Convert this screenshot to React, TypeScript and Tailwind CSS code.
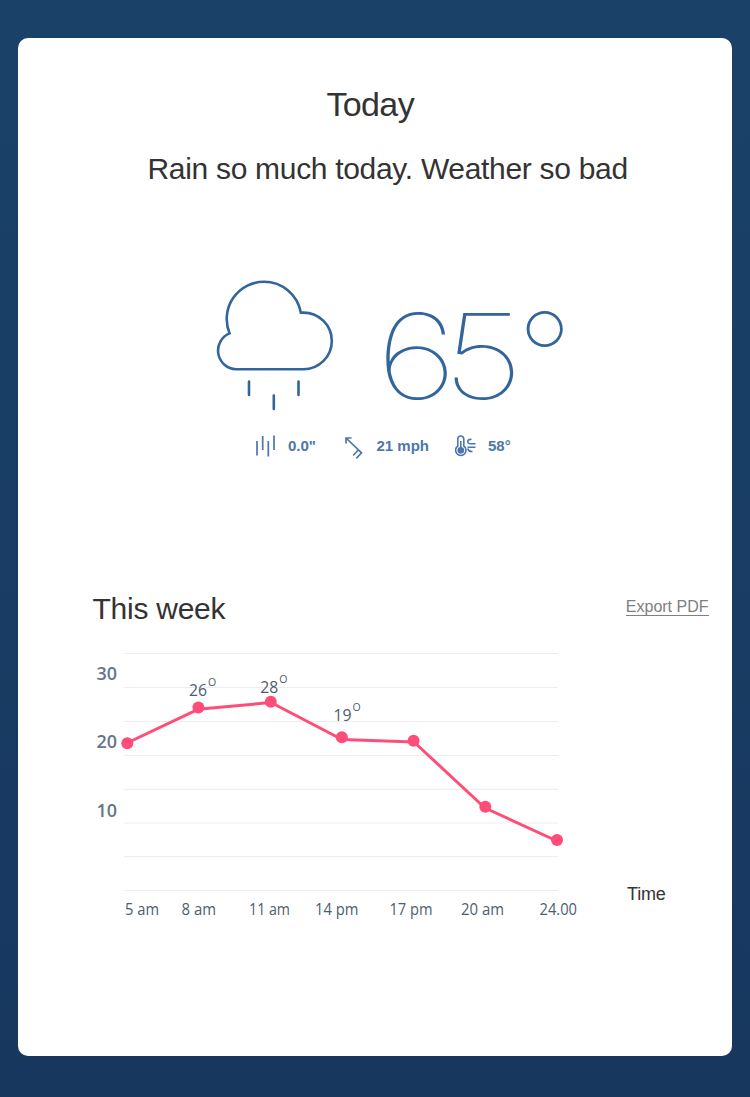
import React from "react";

const gridLines = [653.5, 687.5, 721.5, 755.5, 789.3, 823, 856.7, 890.5];

const segments = "127,743 198,709.3 271,702.5 342,739.5 414,742 485,808 557,841";

const points = [
  [127.3, 743.3],
  [198.4, 707.6],
  [270.8, 701.7],
  [341.8, 737.3],
  [413.6, 740.7],
  [485.3, 806.7],
  [557, 840],
];

const yLabels = [
  { text: "30", y: 680 },
  { text: "20", y: 748 },
  { text: "10", y: 817 },
];

const xLabels = [
  { text: "5 am", x: 125, w: 34 },
  { text: "8 am", x: 181.5, w: 34.5 },
  { text: "11 am", x: 249, w: 41 },
  { text: "14 pm", x: 315, w: 43.5 },
  { text: "17 pm", x: 389.5, w: 43 },
  { text: "20 am", x: 461, w: 43 },
  { text: "24.00", x: 539.5, w: 37.5 },
];

const values = [
  { text: "26", x: 189, y: 696 },
  { text: "28", x: 260.3, y: 693 },
  { text: "19", x: 333.5, y: 721 },
];

function RainCloud() {
  return (
    <svg className="h-[134px] w-[122px] shrink-0" viewBox="215 278 122 134" fill="none" stroke="#32659c" strokeWidth="2.6">
      <path d="M236 369.2H303.5A28.3 28.3 0 0 0 303.5 312.6H300.8A37.3 37.3 0 0 0 264 281.7A37.3 37.3 0 0 0 229.6 333.4A18.6 18.6 0 0 0 236 369.2Z" />
      <path strokeLinecap="round" d="M249 381.5V395M273.8 395.5V409M298.5 381.5V395" />
    </svg>
  );
}

function TemperatureChart() {
  return (
    <svg className="h-[285px] w-[510px] shrink-0" viewBox="85 640 510 285">
      {gridLines.map((y) => (
        <line key={y} x1="124" x2="558" y1={y} y2={y} stroke="#eeeef1" strokeWidth="1.2" />
      ))}
      <g className="font-['Open_Sans',sans-serif] text-[17.5px] font-semibold" fill="#64758a">
        {yLabels.map((l) => (
          <text key={l.text} x="96.5" y={l.y} textLength="20.5" lengthAdjust="spacingAndGlyphs">{l.text}</text>
        ))}
      </g>
      <polyline points={segments} fill="none" stroke="#ff4d79" strokeWidth="3" strokeLinejoin="round" />
      {points.map(([x, y]) => (
        <circle key={x} cx={x} cy={y} r="6" fill="#ff4d79" />
      ))}
      <g className="font-['Open_Sans',sans-serif] text-[16.5px]" fill="#4c5d70">
        {values.map((v) => (
          <React.Fragment key={v.text}>
            <text x={v.x} y={v.y} textLength="18" lengthAdjust="spacingAndGlyphs">{v.text}</text>
            <text x={v.x + 19} y={v.y - 10} className="text-[10.5px]">O</text>
          </React.Fragment>
        ))}
        {xLabels.map((l) => (
          <text key={l.text} x={l.x} y="915" textLength={l.w} lengthAdjust="spacingAndGlyphs" className="text-[16px]">{l.text}</text>
        ))}
      </g>
    </svg>
  );
}

export default function App() {
  return (
    <div className="h-[1097px] w-[750px] overflow-hidden bg-linear-to-b from-[#1a4269] to-[#17375f] px-[18px] pt-[38px] font-['Liberation_Sans',Arial,sans-serif] text-[#333]">
      <main className="flex h-[1018px] flex-col rounded-[10px] bg-white">
        <h1 className="mt-[46px] ml-[308.5px] h-10 text-[34px] leading-10 tracking-[-0.65px] whitespace-nowrap">Today</h1>
        <p className="mt-[25px] ml-[129.5px] h-10 text-[30px] leading-10 tracking-[-0.31px] whitespace-nowrap">Rain so much today. Weather so bad</p>

        <section className="mt-[89px] ml-[197px] flex h-[134px]">
          <RainCloud />
          <div className="mt-[11px] ml-[38.5px] flex h-[134px] text-[118px] leading-[134px] font-thin font-['Inter',sans-serif] text-[#32659c]">
            <span className="w-[141.5px] origin-left scale-x-[1.22] tracking-[-12px] whitespace-nowrap">65</span>
            <span className="pt-px text-[122px] whitespace-nowrap">°</span>
          </div>
        </section>

        <section className="mt-[20px] ml-[235px] flex h-[28px] items-center text-[15px] font-bold text-[#4d76aa]">
          <svg className="h-7 w-6" viewBox="253 432 24 28" fill="none" stroke="#4d76aa" strokeWidth="1.7">
            <path d="M257 441V455.5M262.7 436V450M268.3 441V456.5M274 435.5V450" />
          </svg>
          <span className="ml-[11px] w-[55px]">0.0"</span>
          <svg className="h-7 w-[22px]" viewBox="343 432 22 28" fill="none" stroke="#4d76aa" strokeWidth="1.7">
            <path d="M346 443.5V438H351.5M346 438L361.5 452.8L356.3 458.3M358.3 450L353.2 455.5" />
          </svg>
          <span className="ml-[11.5px] w-[76.5px] whitespace-nowrap">21 mph</span>
          <svg className="h-7 w-[24px]" viewBox="453 432 24 28" fill="none" stroke="#4d76aa" strokeWidth="1.6">
            <path d="M457.8 446V439A3 3 0 0 1 463.8 439V446A5.2 5.2 0 1 1 457.8 446Z" />
            <circle cx="460.8" cy="450.3" r="2.6" fill="#4d76aa" />
            <path d="M460.8 441V449M471.5 439.5C467 438.8 466.5 443.8 470.5 443.8H475.5M467.5 447.2H475.5M467.8 448.5C468.3 450.8 470 451.8 472.5 451.5" />
          </svg>
          <span className="ml-[11px]">58°</span>
        </section>

        <div className="mt-[129px] mr-[23.5px] ml-[74.5px] flex h-10 items-start justify-between">
          <h2 className="text-[30px] leading-10 tracking-[-0.25px] whitespace-nowrap">This week</h2>
          <a href="#export" className="mt-[7px] h-[20px] border-b border-[#808080] text-[16px] leading-[21px] whitespace-nowrap text-[#808080]">Export PDF</a>
        </div>

        <section className="mt-[11px] ml-[67px] flex">
          <TemperatureChart />
          <span className="mt-[242px] ml-[32px] text-[18px] leading-6 tracking-[-0.2px]">Time</span>
        </section>
      </main>
    </div>
  );
}
